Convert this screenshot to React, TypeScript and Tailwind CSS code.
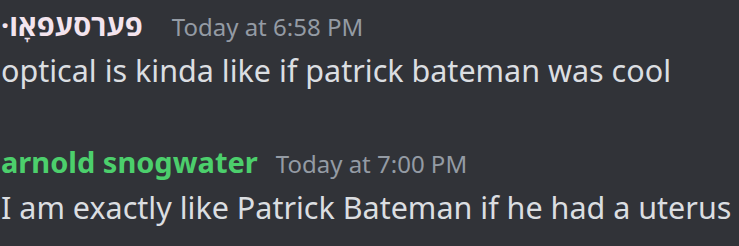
import React from "react";

const font = { fontFamily: '"Noto Sans", "Open Sans", sans-serif' };

const Message = ({
  name,
  nameClass,
  gapClass,
  time,
  text,
  rtl,
}: {
  name: string;
  nameClass: string;
  gapClass: string;
  time: string;
  text: string;
  rtl?: boolean;
}) => (
  <div className="flex flex-col">
    <div className={`flex items-baseline h-[45px] ${gapClass}`}>
      <span dir={rtl ? "rtl" : undefined} className={`text-[29px] font-bold ${nameClass}`}>
        {name}
      </span>
      <span className="text-[24px] text-[#949ba4]">{time}</span>
    </div>
    <p className="text-[30.5px] leading-[44px] text-[#dbdee1] whitespace-nowrap">{text}</p>
  </div>
);

export default function App() {
  return (
    <div
      className="w-[739px] h-[246px] bg-[#313338] overflow-hidden flex flex-col gap-[48px] pl-[1px] pt-[3px]"
      style={font}
    >
      <Message
        name="פערסעפאָו·"
        nameClass="text-[#f3e4ee]"
        gapClass="gap-[29px]"
        time="Today at 6:58 PM"
        text="optical is kinda like if patrick bateman was cool"
        rtl
      />
      <Message
        name="arnold snogwater"
        nameClass="text-[#4ccf6c]"
        gapClass="gap-[18px]"
        time="Today at 7:00 PM"
        text="I am exactly like Patrick Bateman if he had a uterus"
      />
    </div>
  );
}
